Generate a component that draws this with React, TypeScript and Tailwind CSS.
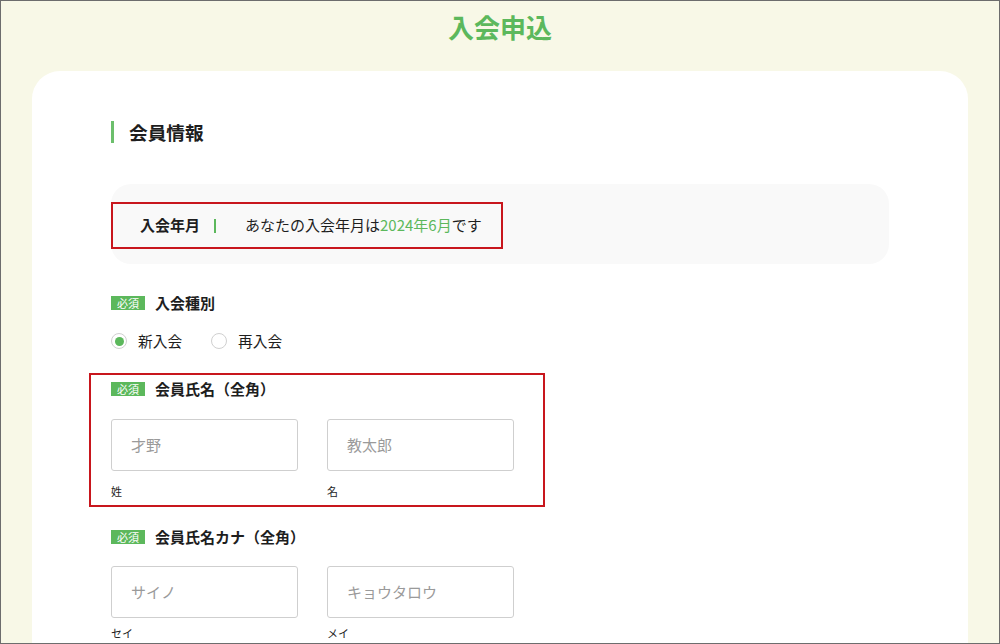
import React from "react";

const font = { fontFamily: '"Noto Sans CJK JP", "Noto Sans", sans-serif' };

function Badge() {
  return (
    <span className="inline-flex h-[14px] items-center bg-[#5cb85c] px-[6px] text-[11px] leading-none text-white">
      必須
    </span>
  );
}

function FieldTitle({ children }: { children: React.ReactNode }) {
  return (
    <div className="flex h-[20px] items-center gap-[10px]">
      <Badge />
      <span className="text-[15px] font-bold text-[#1e1e1e]">{children}</span>
    </div>
  );
}

function Radio({ label, checked }: { label: string; checked?: boolean }) {
  return (
    <label className="flex items-center gap-[11px]">
      <span className="flex h-[16px] w-[16px] items-center justify-center rounded-full border border-[#d0d0d0] bg-white">
        {checked && <span className="h-[9px] w-[9px] rounded-full bg-[#5cb85c]" />}
      </span>
      <span className="text-[14.7px] text-[#1e1e1e]">{label}</span>
    </label>
  );
}

function NameInputs({
  first,
  last,
  a,
  b,
  gap,
}: {
  first: string;
  last: string;
  a: string;
  b: string;
  gap: string;
}) {
  return (
    <div className="flex gap-[29px]">
      {[
        [first, a],
        [last, b],
      ].map(([ph, lbl]) => (
        <div key={lbl} className="w-[187px]">
          <div className="flex h-[52px] items-center rounded-[3px] border border-[#cfcfcf] bg-white px-[19px] text-[15px] text-[#9a9a9a]">
            {ph}
          </div>
          <div className={`${gap} text-[11px] leading-[16px] text-[#1e1e1e]`}>{lbl}</div>
        </div>
      ))}
    </div>
  );
}

export default function App() {
  return (
    <div
      style={font}
      className="h-[644px] w-[1000px] overflow-hidden border border-[#6d6d6d] bg-[#f8f8e7]"
    >
      <h1 className="pt-[9px] text-center text-[26px] font-bold leading-[34px] text-[#5cb85c]">
        入会申込
      </h1>

      <div className="mx-[31px] mt-[27px] h-[700px] rounded-[28px] bg-white pl-[79px] pr-[79px] pt-[49px]">
        {/* section heading */}
        <div className="flex h-[24px] items-center gap-[15px]">
          <span className="h-[22px] w-[3px] bg-[#6cbf6c]" />
          <h2 className="text-[18.7px] font-bold text-[#1e1e1e]">会員情報</h2>
        </div>

        {/* join date */}
        <div className="mt-[40px] rounded-[20px] bg-[#f9f9f9] pb-[15px] pt-[18px]">
          <div className="inline-flex h-[47px] items-center border-2 border-[#c8161d] pl-[27px] pr-[19px] text-[15px] text-[#1e1e1e]">
            <span className="font-bold">入会年月</span>
            <span className="ml-[14px] h-[14px] w-[2px] bg-[#5cb85c]" />
            <span className="ml-[29px]">
              あなたの入会年月は<span className="text-[#5cb85c]">2024年6月</span>です
            </span>
          </div>
        </div>

        {/* join type */}
        <div className="mt-[29px]">
          <FieldTitle>入会種別</FieldTitle>
          <div className="mt-[18px] flex h-[20px] items-center gap-[29px]">
            <Radio label="新入会" checked />
            <Radio label="再入会" />
          </div>
        </div>

        {/* name */}
        <div className="-ml-[22px] mt-[22px] w-[456px] border-2 border-[#c8161d] pb-[6px] pl-[20px] pt-[4px]">
          <FieldTitle>会員氏名（全角）</FieldTitle>
          <div className="mt-[20px]">
            <NameInputs first="才野" last="教太郎" a="姓" b="名" gap="mt-[12px]" />
          </div>
        </div>

        {/* kana */}
        <div className="mt-[20px]">
          <FieldTitle>会員氏名カナ（全角）</FieldTitle>
          <div className="mt-[19px]">
            <NameInputs first="サイノ" last="キョウタロウ" a="セイ" b="メイ" gap="mt-[7px]" />
          </div>
        </div>
      </div>
    </div>
  );
}
